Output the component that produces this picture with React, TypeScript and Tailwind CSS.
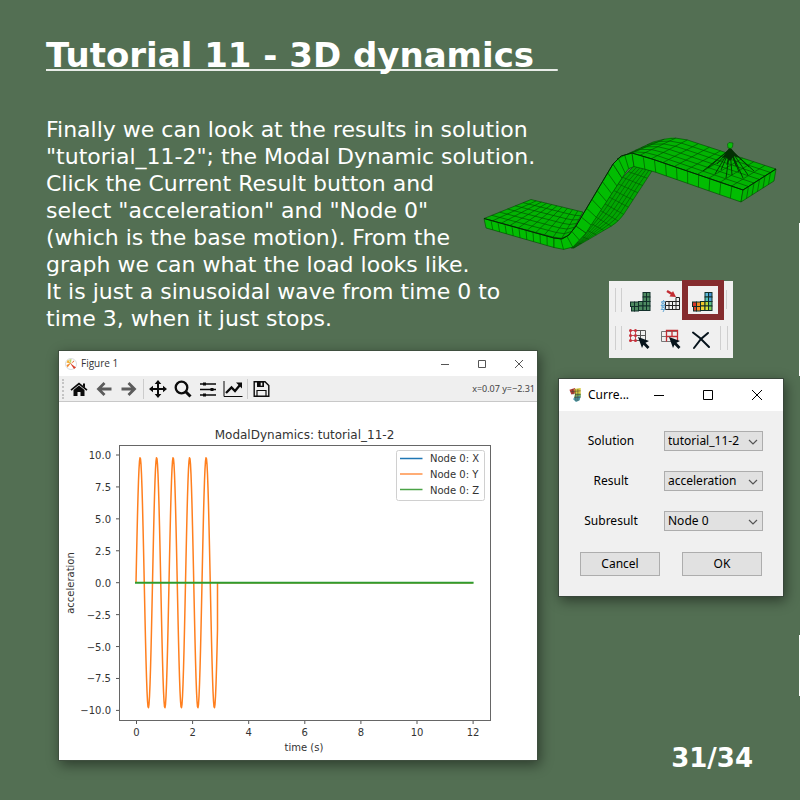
import { useId, type ReactNode } from "react";

type Point = [number, number];

const SANS = "font-['DejaVu_Sans',sans-serif]";
const DIALOG = "font-['Noto_Sans',sans-serif]";

/* ---------- geometry helpers for the finite element drawing ---------- */

function along(line: Point[], t: number): Point {
  const lengths = line.slice(1).map((p, i) => Math.hypot(p[0] - line[i][0], p[1] - line[i][1]));
  let rest = t * lengths.reduce((a, b) => a + b, 0);
  for (let i = 0; i < lengths.length; i++) {
    if (rest <= lengths[i] || i === lengths.length - 1) {
      const k = lengths[i] === 0 ? 0 : rest / lengths[i];
      return [line[i][0] + (line[i + 1][0] - line[i][0]) * k, line[i][1] + (line[i + 1][1] - line[i][1]) * k];
    }
    rest -= lengths[i];
  }
  return line[line.length - 1];
}

function between(a: Point, b: Point, k: number): Point {
  return [a[0] + (b[0] - a[0]) * k, a[1] + (b[1] - a[1]) * k];
}

function toPath(points: Point[]) {
  return "M" + points.map((p) => `${p[0].toFixed(1)} ${p[1].toFixed(1)}`).join("L");
}

interface PatchProps {
  near: Point[];
  far: Point[];
  cols: number;
  rows: number;
  fill: string;
  weight?: number;
}

function Patch({ near, far, cols, rows, fill, weight = 0.6 }: PatchProps) {
  const lines: string[] = [];
  for (let c = 0; c <= cols; c++) {
    lines.push(toPath([along(near, c / cols), along(far, c / cols)]));
  }
  for (let r = 0; r <= rows; r++) {
    const row: Point[] = [];
    for (let c = 0; c <= cols; c++) row.push(between(along(near, c / cols), along(far, c / cols), r / rows));
    lines.push(toPath(row));
  }
  return (
    <g>
      <path d={toPath([...near, ...[...far].reverse()]) + "Z"} fill={fill} />
      <path d={lines.join("")} fill="none" stroke="#034403" strokeWidth={weight} />
    </g>
  );
}

const SPIDER_FEET: Point[] = [
  [703, 171], [708, 168], [715, 174], [721, 170], [726, 178], [727, 165], [732, 175],
  [736, 166], [743, 178], [748, 175], [754, 171], [749, 167], [717, 164], [739, 172],
];

function MeshDrawing() {
  return (
    <svg viewBox="480 134 300 118" className="block w-full" role="img" aria-label="Deformed mesh">
      <Patch near={[[484, 218.5], [560, 239], [570, 235]]} far={[[531, 199.5], [583, 212]]} cols={10} rows={6} fill="#02b302" />
      <Patch
        near={[[571, 248], [580, 240], [622, 178], [634, 166]]}
        far={[[574, 248], [615, 224], [622, 217], [652, 171]]}
        cols={13} rows={6} fill="#02a502" weight={0.5}
      />
      <Patch
        near={[[617, 159], [632, 153], [652, 159], [743, 190]]}
        far={[[653, 142], [671, 137.5], [686, 139.5], [776, 169]]}
        cols={11} rows={6} fill="#02b302"
      />
      <Patch near={[[484, 218.5], [554, 238]]} far={[[486, 228], [554, 247.5]]} cols={10} rows={1} fill="#02bd02" />
      <Patch near={[[554, 238], [562, 239], [569, 235], [576, 226]]} far={[[554, 247.5], [564, 249.5], [573, 247], [586, 233]]} cols={4} rows={1} fill="#02bd02" />
      <Patch near={[[576, 226], [613, 164]]} far={[[586, 233], [622, 178]]} cols={7} rows={1} fill="#02bd02" />
      <Patch near={[[613, 164], [621, 156], [632, 153]]} far={[[622, 178], [628, 169], [634, 166.5]]} cols={3} rows={1} fill="#02bd02" />
      <Patch near={[[632, 153], [652, 159], [743, 190]]} far={[[634, 166.5], [652, 171], [741, 202]]} cols={10} rows={1} fill="#02bd02" />
      <Patch near={[[743, 190], [776, 169]]} far={[[741, 202], [774, 181]]} cols={6} rows={1} fill="#02b302" />
      <path d="M484 218.5L554 238L562 239L569 235L576 226L613 164L621 156L632 153L652 159L743 190L776 169" fill="none" stroke="#022a02" strokeWidth="1" />
      <path d={SPIDER_FEET.map((p) => `M730 149L${p[0]} ${p[1]}`).join("")} stroke="#033003" strokeWidth="0.9" fill="none" />
      <path d="M730 147L722 158L726 157L730 161L734 156L739 158Z" fill="#033003" />
      <path d="M727.5 144L729 142.500L733 143L732.500 147L731 148.500L728 148Z" fill="#0bbf0b" stroke="#045504" strokeWidth="0.6" />
    </svg>
  );
}

/* ---------- plot ---------- */

const X0 = 136;
const PER_SECOND = 28.05;
const Y0 = 582.7;
const PER_UNIT = 12.77;
const Y_TICKS = [10, 7.5, 5, 2.5, 0, -2.5, -5, -7.5, -10];
const X_TICKS = [0, 2, 4, 6, 8, 10, 12];

const wave = (() => {
  const points: Point[] = [];
  for (let x = 0; x <= 81.5; x += 0.5) {
    points.push([X0 + x, Y0 - Math.sin((x / 16.5) * 2 * Math.PI) * 9.8 * PER_UNIT]);
  }
  points.push([X0 + 81.5, Y0], [X0 + 12 * PER_SECOND, Y0]);
  return toPath(points);
})();

const LEGEND = [
  { name: "Node 0: X", color: "#1f77b4" },
  { name: "Node 0: Y", color: "#ff9248" },
  { name: "Node 0: Z", color: "#4ba346" },
];

function Plot() {
  return (
    <svg viewBox="59 402 478 358" className={`block w-full text-[10px] ${SANS}`} fill="#333333">
      <text x="304.500" y="439" textAnchor="middle" className="text-[12px]">ModalDynamics: tutorial_11-2</text>
      {Y_TICKS.map((v) => (
        <g key={v}>
          <path d={`M116 ${Y0 - v * PER_UNIT}H119.500`} stroke="#555" />
          <text x="111" y={Y0 - v * PER_UNIT + 4} textAnchor="end">{v.toFixed(1).replace("-", "−")}</text>
        </g>
      ))}
      {X_TICKS.map((v) => (
        <g key={v}>
          <path d={`M${X0 + 0.5 + v * PER_SECOND} 720.500V724`} stroke="#555" />
          <text x={X0 + 0.5 + v * PER_SECOND} y="736" textAnchor="middle">{v}</text>
        </g>
      ))}
      <text x="304" y="751" textAnchor="middle">time (s)</text>
      <text transform="translate(73.500 583) rotate(-90)" textAnchor="middle">acceleration</text>
      <path d={wave} fill="none" stroke="#ff7f1e" strokeWidth="1.500" strokeLinejoin="round" />
      <path d={`M${X0 - 1} ${Y0}H${X0 + 12 * PER_SECOND + 1}`} stroke="#2f9c2f" strokeWidth="2" />
      <rect x="119.500" y="445.500" width="371" height="275" fill="none" stroke="#666" />
      <rect x="396.500" y="450.500" width="88" height="50" rx="2" fill="#fff" stroke="#d0d0d0" />
      {LEGEND.map((item, i) => (
        <g key={item.name}>
          <path d={`M400 ${458.5 + i * 15.5}H422.500`} stroke={item.color} strokeWidth="1.500" />
          <text x="430" y={462 + i * 16}>{item.name}</text>
        </g>
      ))}
    </svg>
  );
}

/* ---------- plot window ---------- */

function ToolButton({ label, children }: { label: string; children: ReactNode }) {
  return (
    <button type="button" aria-label={label} className="flex size-5 items-center justify-center">
      <svg viewBox="0 0 20 20" className="size-5" fill="none" stroke="#0b0b0b">{children}</svg>
    </button>
  );
}

function FigureWindow() {
  return (
    <section aria-label="Figure 1" className="border border-[#3f4f3f] bg-white shadow-[2px_4px_12px_rgba(0,0,0,0.45)]">
      <header className="flex h-[25px] items-center pl-1.5">
        <svg viewBox="0 0 12 12" className="size-3">
          <circle cx="6" cy="6" r="5.500" fill="#fff" stroke="#c9ced2" strokeWidth="0.700" />
          <path d="M6 6L1.500 4.500L3 1.500Z" fill="#f2b33d" />
          <path d="M6 6L4 1.800L6.500 1Z" fill="#b9d56a" />
          <path d="M5 5L11 9.500L9 11Z" fill="#d9412b" />
          <path d="M6 5L1.500 7L2.500 9.500Z" fill="#f08a33" />
          <path d="M6 6L8.500 2.500L9.300 3.500Z" fill="#e8703a" />
        </svg>
        <h2 className="ml-1 flex-1 font-['Open_Sans',sans-serif] text-[10px] text-[#333]">Figure 1</h2>
        <button type="button" aria-label="Minimize" className="flex w-[37px] justify-center">
          <svg viewBox="0 0 10 10" className="size-2.5"><path d="M1 5.500H9" stroke="#555" /></svg>
        </button>
        <button type="button" aria-label="Maximize" className="flex w-[37px] justify-center">
          <svg viewBox="0 0 10 10" className="size-2.5"><path d="M1.500 1.500H8.500V8.500H1.500Z" fill="none" stroke="#555" /></svg>
        </button>
        <button type="button" aria-label="Close" className="flex w-[37px] justify-center">
          <svg viewBox="0 0 10 10" className="size-2.5"><path d="M1 1L9 9M9 1L1 9" stroke="#555" /></svg>
        </button>
      </header>
      <div className="flex h-[26px] items-center gap-[5px] border-b border-[#c8c8c8] bg-[#efefef] pl-[3px]">
        <span className="h-5 border-l-2 border-dotted border-[#c4c4c4]" />
        <ToolButton label="Home">
          <path d="M10 6.500L4.500 11V17H8.500V13H11.500V17H15.500V11Z" fill="#0b0b0b" stroke="none" />
          <path d="M2 11.200L10 4.500L18 11.200" strokeWidth="1.700" />
          <path d="M14 4.500H16V9L14 7Z" fill="#0b0b0b" stroke="none" />
        </ToolButton>
        <ToolButton label="Back"><path d="M17.500 10H5M10.500 4L4.500 10L10.500 16" stroke="#5c5c5c" strokeWidth="2.800" /></ToolButton>
        <ToolButton label="Forward"><path d="M2.500 10H15M9.500 4L15.500 10L9.500 16" stroke="#5c5c5c" strokeWidth="2.800" /></ToolButton>
        <span className="-mx-px h-5 border-l border-[#ccc]" />
        <ToolButton label="Pan">
          <path d="M10 4V16M4 10H16" strokeWidth="2" />
          <path d="M10 1L13.300 5H6.700ZM10 19L13.300 15H6.700ZM1 10L5 6.700V13.300ZM19 10L15 6.700V13.300Z" fill="#0b0b0b" stroke="none" />
        </ToolButton>
        <ToolButton label="Zoom">
          <circle cx="8.500" cy="8.500" r="5.800" strokeWidth="2.300" /><path d="M12.500 12.500L17.500 17.500" strokeWidth="3" />
        </ToolButton>
        <ToolButton label="Configure subplots">
          <path d="M2 5H18M2 10.500H18M2 16H18" strokeWidth="1.300" />
          <path d="M6.500 3.500V6.500M14 9V12M6.500 14.500V17.500" strokeWidth="3" />
        </ToolButton>
        <ToolButton label="Edit axes">
          <path d="M1 2V17.500H19.500" strokeWidth="1" />
          <path d="M3 14L8.500 8.500L12 12L17 6" strokeWidth="2.300" />
          <path d="M13 3.500H19V9.500Z" fill="#0b0b0b" stroke="none" />
        </ToolButton>
        <span className="-mx-px h-5 border-l border-[#ccc]" />
        <ToolButton label="Save">
          <path d="M2.200 2.700H13L16.800 6.500V17.300H2.200Z" strokeWidth="1.400" />
          <path d="M5 2.700H12V8H5Z" fill="#0b0b0b" stroke="none" /><path d="M9.500 3.700V6.700" stroke="#efefef" strokeWidth="1.600" />
          <path d="M5 17V11.500H14V17" strokeWidth="1.200" />
        </ToolButton>
        <output className={`ml-auto pr-0.5 text-[9px] whitespace-nowrap text-[#444] font-['Noto_Sans',sans-serif]`}>x=0.07 y=−2.31</output>
      </div>
      <Plot />
    </section>
  );
}

/* ---------- result toolbar ---------- */

const L_CELLS: { x: number; y: number; w: number; color: string }[] = [
  { x: 17, y: 6.5, w: 3.5, color: "#5bb8d9" }, { x: 20.5, y: 6.5, w: 3.5, color: "#3f8fd0" },
  { x: 17, y: 11, w: 3.5, color: "#58c4b8" }, { x: 20.5, y: 11, w: 3.5, color: "#4fa6d8" },
  { x: 4.5, y: 16, w: 4, color: "#d8342a" }, { x: 8.5, y: 16, w: 4, color: "#ee8a25" },
  { x: 12.5, y: 15.5, w: 4.5, color: "#f0c52a" }, { x: 17, y: 15.5, w: 3.5, color: "#b9d83c" }, { x: 20.5, y: 15.5, w: 3.5, color: "#59bf8a" },
  { x: 5.5, y: 20.5, w: 3, color: "#e2402a" }, { x: 8.5, y: 20.5, w: 4, color: "#f0902a" },
  { x: 12.5, y: 20, w: 4.5, color: "#f3d534" }, { x: 17, y: 20, w: 3.5, color: "#d8e038" }, { x: 20.5, y: 20, w: 3.5, color: "#7fcf5a" },
];

function LBlock({ color }: { color?: string }) {
  return (
    <g stroke="#12302a" strokeWidth="1">
      {L_CELLS.map((cell, i) => (
        <rect key={i} x={cell.x} y={cell.y} width={cell.w} height="4.500" fill={color ?? cell.color} />
      ))}
    </g>
  );
}

const CURSOR = "M0 0L11 4L7.500 5.800L11.500 10L9.500 12L5.500 7.800L4 11Z";

function ResultButton({ label, active = false, children }: { label: string; active?: boolean; children: ReactNode }) {
  return (
    <button
      type="button"
      aria-label={label}
      aria-pressed={active}
      className={active ? "h-7 w-[30px] outline-[6px] outline-solid outline-[#852c2e]" : "h-7 w-[30px]"}
    >
      <svg viewBox="0 0 30 28" className="block h-7 w-[30px]" fill="none">{children}</svg>
    </button>
  );
}

function Divider() {
  return <span className="h-6 border-l border-[#cfcfcf]" />;
}

function ResultToolbar() {
  return (
    <div role="toolbar" aria-label="Results" className="flex w-[124px] flex-col gap-2.5 self-center bg-[#f0f0f0] pt-[5px] pb-1.5 pl-1.5">
      <div className="flex items-center gap-px">
        <div className="mr-[3px] flex gap-[5px]"><Divider /><Divider /></div>
        <ResultButton label="Model"><LBlock color="#4d8a60" /></ResultButton>
        <ResultButton label="Loads and constraints">
          <path d="M8.500 15.500H22.500V23.500H8.500ZM8.500 19.500H22.500M12 15.500V23.500M15.500 15.500V23.500M19 11.500V23.500M22.500 11.500V23.500M19 11.500H22.500" stroke="#222" />
          <path d="M10 5L15 8" stroke="#c22c32" strokeWidth="2.500" /><path d="M19 11L12.500 10.500L16 5Z" fill="#c22c32" />
          <path d="M4 16L8 15.500L4 19.500L8 19.500L4 23.500L8 23.500M7 14L4.500 17L8 18.500L4.500 21L8 22L6 26" stroke="#65a9d6" />
        </ResultButton>
        <ResultButton label="Current result" active><LBlock /></ResultButton>
        <div className="ml-[7px]"><Divider /></div>
      </div>
      <div className="flex items-center gap-px">
        <div className="mr-[3px] flex gap-[5px]"><Divider /><Divider /></div>
        <ResultButton label="Select nodes">
          <path d="M4.500 6.500H19.500V16.500H4.500ZM9.500 6.500V16.500M14.500 6.500V16.500M4.500 11.500H19.500" stroke="#555" />
          <path d="M4.500 6.500H9.500V16.500H4.500ZM4.500 11.500H9.500" stroke="#bd5058" />
          <g fill="#c8303a">{[4.5, 9.5].map((x) => [6.5, 11.5, 16.5].map((y) => <circle key={`${x}-${y}`} cx={x} cy={y} r="1.500" />))}</g>
          <path d={CURSOR} transform="translate(12 13)" fill="#07141c" />
        </ResultButton>
        <ResultButton label="Select elements">
          <path d="M4.500 7.500H20.500V17.500H4.500ZM4.500 12.500H20.500M9.500 7.500V17.500" stroke="#777" />
          <path d="M9.500 6.500H20.500V12.500H9.500ZM15 6.500V12.500M9.500 12.500V17.500M20.500 12.500V17" stroke="#c22c32" strokeWidth="1.300" />
          <path d={CURSOR} transform="translate(12 13)" fill="#07141c" />
        </ResultButton>
        <ResultButton label="Deselect">
          <path d="M5 8.500L12 14L21 23" stroke="#07141c" strokeWidth="2" strokeLinecap="round" />
          <path d="M20 9L13 15L6 24" stroke="#07141c" strokeWidth="2" strokeLinecap="round" />
        </ResultButton>
        <div className="ml-px flex gap-[6px]"><Divider /><Divider /></div>
      </div>
    </div>
  );
}

/* ---------- current result dialog ---------- */

function Field({ label, value }: { label: string; value: string }) {
  const id = useId();
  return (
    <div className="flex items-center gap-[21px]">
      <label htmlFor={id} className="w-16 text-center">{label}</label>
      <div className="relative flex-1">
        <select id={id} defaultValue={value} className="block h-5 w-full appearance-none rounded-none border border-[#adadad] bg-[#e1e1e1] pl-[3px] leading-4">
          <option>{value}</option>
        </select>
        <svg viewBox="0 0 10 6" className="pointer-events-none absolute top-[8px] right-[5px] h-1.5 w-2.5" fill="none">
          <path d="M1 1L5 5L9 1" stroke="#555" strokeWidth="1.200" />
        </svg>
      </div>
    </div>
  );
}

function ResultDialog() {
  return (
    <section role="dialog" aria-label="Current result" className={`border border-[#38463a] bg-[#f0f0f0] text-[12px] text-black shadow-[2px_4px_12px_rgba(0,0,0,0.45)] ${DIALOG}`}>
      <header className="flex h-8 items-center bg-white pr-0.5 pl-2.5">
        <svg viewBox="0 0 14 15" className="size-3.5">
          <path d="M0 2L6 0V6L2 7Z" fill="#b93b35" />
          <path d="M5 1L12 0V8H6Z" fill="#d8c83f" />
          <path d="M6 6H12L12 10H5Z" fill="#7fb254" />
          <path d="M5 10L12 8L11 13L7 15L4 12Z" fill="#4b9aa8" />
          <path d="M1 4L12 3M6 7H12M5 10H12M3 1L4 7M6 1L7 14M9 1V14" stroke="#474236" strokeWidth="0.600" fill="none" />
        </svg>
        <h2 className="ml-[5px] flex-1">Curre...</h2>
        <button type="button" aria-label="Minimize" className="flex w-[49px] justify-center">
          <svg viewBox="0 0 10 10" className="size-2.5"><path d="M0 5.500H10" stroke="#000" /></svg>
        </button>
        <button type="button" aria-label="Maximize" className="flex w-[49px] justify-center">
          <svg viewBox="0 0 10 10" className="size-2.5"><path d="M0.500 0.500H9.500V9.500H0.500Z" fill="none" stroke="#000" /></svg>
        </button>
        <button type="button" aria-label="Close" className="flex w-[49px] justify-center">
          <svg viewBox="0 0 10 10" className="size-2.5"><path d="M0 0L10 10M10 0L0 10" stroke="#000" /></svg>
        </button>
      </header>
      <form className="flex flex-col gap-5 px-5 py-5" onSubmit={(e) => e.preventDefault()}>
        <Field label="Solution" value="tutorial_11-2" />
        <Field label="Result" value="acceleration" />
        <Field label="Subresult" value="Node 0" />
        <div className="flex justify-between px-px pt-px">
          <button type="button" className="h-6 w-20 border border-[#adadad] bg-[#e1e1e1]">Cancel</button>
          <button type="submit" className="h-6 w-20 border border-[#adadad] bg-[#e1e1e1]">OK</button>
        </div>
      </form>
    </section>
  );
}

/* ---------- slide ---------- */

export default function App() {
  return (
    <main className={`relative min-h-screen overflow-hidden bg-[#536f53] pt-[35px] pr-4 pb-6 text-white ${SANS}`}>
      <h1 className="pl-[46px] text-[34px] leading-[40px] font-bold whitespace-pre underline decoration-[#e8ede8] decoration-2 underline-offset-2 [text-decoration-skip-ink:none]">{"Tutorial 11 - 3D dynamics  "}</h1>
      <div className="mt-[41px] flex gap-5">
        <div className="flex min-w-0 flex-1 flex-col gap-[18px] pl-[58px]">
          <p className="-ml-3 text-[22px] leading-[27px] whitespace-nowrap">
            Finally we can look at the results in solution<br />
            "tutorial_11-2"; the Modal Dynamic solution.<br />
            Click the Current Result button and<br />
            select "acceleration" and "Node 0"<br />
            (which is the base motion). From the<br />
            graph we can what the load looks like.<br />
            It is just a sinusoidal wave from time 0 to<br />
            time 3, when it just stops.
          </p>
          <FigureWindow />
        </div>
        <div className="flex min-h-[658px] w-[226px] flex-col pt-[18px]">
          <div className="-mr-1 mb-[29px] -ml-[78px] w-[300px] max-w-none"><MeshDrawing /></div>
          <ResultToolbar />
          <div className="mt-5"><ResultDialog /></div>
          <p className="mt-auto pr-[31px] text-right text-[26px] leading-8 font-bold">31/34</p>
        </div>
      </div>
      <span className="absolute top-[223px] right-0 h-[153px] w-px bg-white" />
      <span className="absolute top-[635px] right-0 h-[61px] w-px bg-white" />
    </main>
  );
}
